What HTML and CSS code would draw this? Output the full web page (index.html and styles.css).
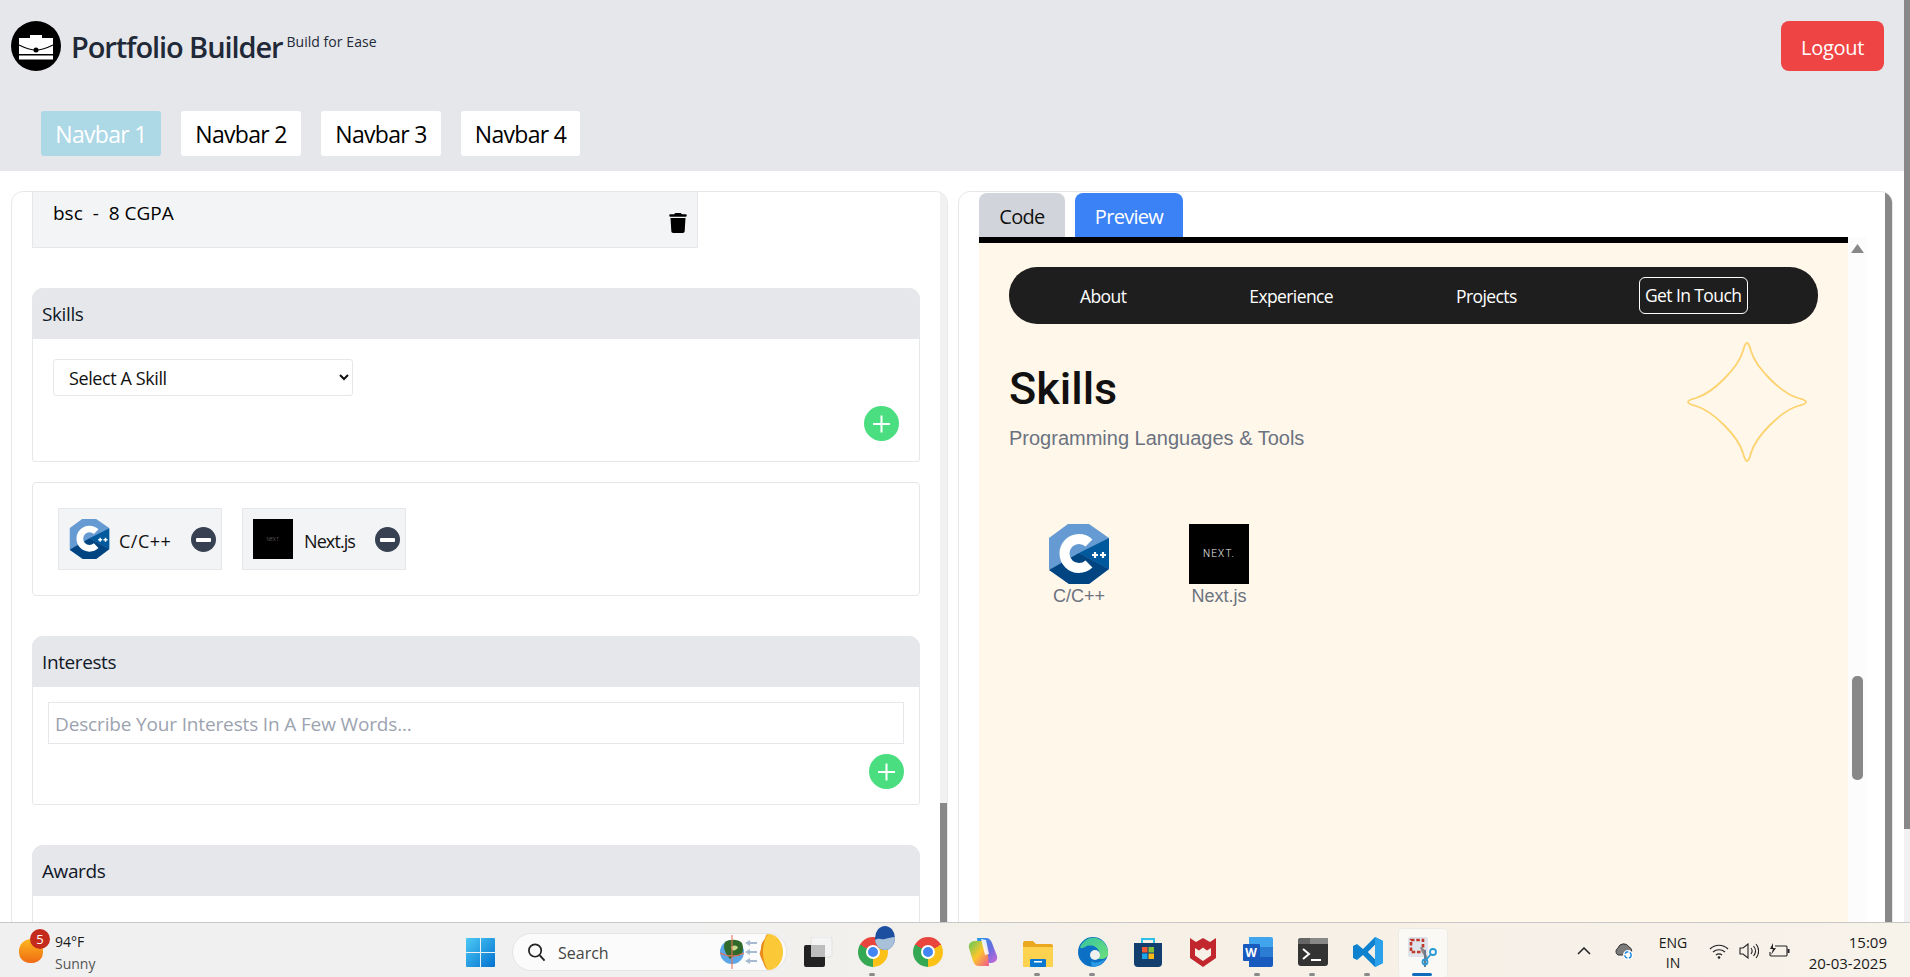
FILE: index.html
```html
<!DOCTYPE html>
<html lang="en">
<head>
<meta charset="utf-8">
<title>Portfolio Builder</title>
<link rel="stylesheet" href="styles.css">
</head>
<body>
<div class="window">
  <div class="main">
    <header class="header">
      <div class="brand-row">
        <div class="logo">
          <svg viewBox="0 0 50 50" width="50" height="50"><circle cx="25" cy="25" r="25" fill="#000"/><path d="M19 14h12v3h-12z" fill="#fff"/><path d="M8 17h34v16H8z" fill="#fff"/><path d="M8 34.500h34v4H8z" fill="#fff"/><path d="M8 24c6 3 11 5 17 5s11-2 17-5" fill="none" stroke="#000" stroke-width="1.200"/><circle cx="25" cy="29" r="2.500" fill="#000"/></svg>
        </div>
        <h1 class="title">Portfolio Builder</h1>
        <span class="tagline">Build for Ease</span>
        <button class="logout">Logout</button>
      </div>
      <nav class="nav-tabs">
        <button class="nav-tab nav-tab-active">Navbar 1</button>
        <button class="nav-tab">Navbar 2</button>
        <button class="nav-tab">Navbar 3</button>
        <button class="nav-tab">Navbar 4</button>
      </nav>
    </header>
    <div class="panels">
      <section class="panel panel-left">
        <div class="form-col">
          <div class="edu-item">
            <span class="edu-text">bsc &nbsp;-&nbsp; 8 CGPA</span>
            <svg class="trash" viewBox="0 0 448 512"><path d="M135.200 17.700L128 32H32C14.300 32 0 46.300 0 64S14.300 96 32 96H416c17.700 0 32-14.300 32-32s-14.300-32-32-32H320l-7.200-14.300C307.400 6.800 296.300 0 284.200 0H163.800c-12.100 0-23.200 6.800-28.600 17.700zM416 128H32L53.200 467c1.600 25.300 22.600 45 47.900 45H346.900c25.300 0 46.300-19.700 47.900-45L416 128z"/></svg>
          </div>
          <div class="card card-skills">
            <div class="card-head">Skills</div>
            <div class="skills-body">
              <select class="skill-select"><option>Select A Skill</option></select>
              <div class="plus-row"><span class="plus"></span></div>
            </div>
          </div>
          <div class="card card-chips">
            <div class="chip">
              <svg class="chip-icon" viewBox="0 0 60 60"><use href="#cpp"/></svg>
              <span class="chip-label">C/C++</span>
              <span class="minus"></span>
            </div>
            <div class="chip">
              <div class="next-tile next-tile-small">NEXT.</div>
              <span class="chip-label chip-label-next">Next.js</span>
              <span class="minus"></span>
            </div>
          </div>
          <div class="card card-interests">
            <div class="card-head">Interests</div>
            <div class="interests-body">
              <input class="interest-input" placeholder="Describe Your Interests In A Few Words...">
              <div class="plus-row plus-row-interests"><span class="plus"></span></div>
            </div>
          </div>
          <div class="card card-awards">
            <div class="card-head">Awards</div>
            <div class="awards-body"></div>
          </div>
        </div>
        <div class="scroll-track"><div class="scroll-thumb"></div></div>
      </section>
      <section class="panel panel-right">
        <div class="right-col">
          <div class="tabs">
            <button class="tab tab-code">Code</button>
            <button class="tab tab-preview">Preview</button>
          </div>
          <div class="preview-row">
            <div class="preview">
              <div class="site-nav">
                <a class="site-link">About</a>
                <a class="site-link">Experience</a>
                <a class="site-link">Projects</a>
                <a class="site-link site-link-box">Get In Touch</a>
              </div>
              <svg class="star" viewBox="0 0 120 120"><path d="M60 1C62 1 63 5 64 9C69 26 94 51 111 56C115 57 119 58 119 60C119 62 115 63 111 64C94 69 69 94 64 111C63 115 62 119 60 119C58 119 57 115 56 111C51 94 26 69 9 64C5 63 1 62 1 60C1 58 5 57 9 56C26 51 51 26 56 9C57 5 58 1 60 1Z" fill="none" stroke="#fdd36f" stroke-width="1.800"/></svg>
              <h2 class="site-title">Skills</h2>
              <p class="site-sub">Programming Languages &amp; Tools</p>
              <div class="site-skills">
                <div class="site-skill">
                  <svg class="site-skill-icon" viewBox="0 0 60 60"><use href="#cpp"/></svg>
                  <span>C/C++</span>
                </div>
                <div class="site-skill">
                  <div class="next-tile">NEXT.</div>
                  <span>Next.js</span>
                </div>
              </div>
            </div>
            <div class="inner-scroll">
              <svg class="inner-arrow" viewBox="0 0 12 8" preserveAspectRatio="none"><path d="M6 0l6 8H0z" fill="#888"/></svg>
              <div class="inner-thumb"></div>
            </div>
          </div>
        </div>
        <div class="right-thumb"></div>
      </section>
    </div>
  </div>
  <div class="page-scroll"><div class="page-thumb"></div></div>
</div>

<footer class="taskbar">
  <div class="weather">
    <span class="weather-icon"></span>
    <span class="weather-badge">5</span>
    <div class="weather-text"><span class="temp">94°F</span><span class="sky">Sunny</span></div>
  </div>
  <svg class="win-logo" viewBox="0 0 29 29"><defs><linearGradient id="w" x1="0" y1="0" x2="1" y2="1"><stop offset="0" stop-color="#4cc9f5"/><stop offset="1" stop-color="#0272cf"/></linearGradient></defs><path d="M1 0h13v14H0V1a1 1 0 0 1 1-1zM15 0h13a1 1 0 0 1 1 1v13H15zM0 15h14v14H1a1 1 0 0 1-1-1zM15 15h14v13a1 1 0 0 1-1 1H15z" fill="url(#w)"/></svg>
  <div class="search">
    <svg class="search-icon" viewBox="0 0 20 20"><circle cx="8.500" cy="8.500" r="6.500" fill="none" stroke="#222" stroke-width="1.800"/><path d="M13.500 13.500L18.500 19" stroke="#222" stroke-width="2"/></svg>
    <span class="search-text">Search</span>
    <svg class="search-art" viewBox="0 0 66 38"><circle cx="13" cy="19" r="12" fill="#5aa6e6"/><path d="M6 9c5-3 13-3 17 1 2 6 1 11-3 13-3-2-5 0-9 3-3-4-8-10-5-17z" fill="#2f6a2a"/><path d="M12 14c3-2 5-2 7 0-1 3-4 4-6 3z" fill="#c9d98a"/><path d="M1 20c7 4 17 4 24 0" fill="none" stroke="#e8735a" stroke-width="1.100"/><path d="M13 2v34" stroke="#e8735a" stroke-width="1.100"/><path d="M28 10h10M28 19h10M28 28h10" stroke="#a7bbd0" stroke-width="2.200"/><path d="M26 10l5-3v6zM26 19l5-3v6zM26 28l5-3v6z" fill="#a7bbd0"/><path d="M49 1c-3 1-2 4-4 6s-3 5-3 8-2 4-1 7 2 5 3 7 1 5 5 8z" fill="#e88a1c"/><path d="M49 1c9 0 15 8 15 18s-6 18-15 18c-3-4-5-11-5-18s2-14 5-18z" fill="#fbc938"/></svg>
  </div>
  <div class="apps">
    <div class="slot">
      <svg class="app" viewBox="0 0 30 30"><rect x="8" y="0" width="21" height="20" rx="2" fill="#f4f4f4" stroke="#e2e2e2"/><rect x="1" y="8" width="21" height="22" rx="2" fill="#222"/><rect x="8" y="8" width="14" height="12" fill="#bdbdbd"/></svg>
    </div>
    <div class="slot slot-open">
      <div class="chrome app"></div>
      <svg class="chrome-badge" viewBox="0 0 20 24"><ellipse cx="10" cy="12" rx="10" ry="12" fill="#1c4fa0"/><path d="M0 14c4-3 6 0 10-1s6-2 10-2c0 7-4 13-10 13-5 0-9-4-10-10z" fill="#a8c0d8"/></svg>
    </div>
    <div class="slot">
      <div class="chrome app"></div>
    </div>
    <div class="slot">
      <svg class="app" viewBox="0 0 30 30"><defs><linearGradient id="c1" x1="0" y1="0" x2="1" y2="1"><stop offset="0" stop-color="#1f9be8"/><stop offset=".55" stop-color="#6a6be0"/><stop offset="1" stop-color="#d06ad6"/></linearGradient><linearGradient id="c2" x1="0" y1="0" x2="1" y2="1"><stop offset="0" stop-color="#5fc85a"/><stop offset=".5" stop-color="#fbc62d"/><stop offset="1" stop-color="#f0568e"/></linearGradient></defs><path d="M9 1H18C21 1 23 3 24 6L29 19C30 23 27 26 23 26H14L10 12Z" fill="url(#c1)"/><path d="M21 29H11C8 29 6 27 5 24L1 11C0 7 3 4 7 4H15L20 18Z" fill="url(#c2)"/><path d="M13 2l5 1 3 14-4 1z" fill="#fff" fill-opacity=".85"/></svg>
    </div>
    <div class="slot slot-open">
      <svg class="app" viewBox="0 0 30 30"><path d="M0 6a2 2 0 0 1 2-2h8l3 3h15a2 2 0 0 1 2 2v19a2 2 0 0 1-2 2H2a2 2 0 0 1-2-2z" fill="#e9a81f"/><path d="M0 10h30v18a2 2 0 0 1-2 2H2a2 2 0 0 1-2-2z" fill="#fdd24f"/><rect x="7" y="22" width="16" height="8" rx="1" fill="#0a78d0"/><rect x="11" y="24" width="8" height="1.500" fill="#fff"/></svg>
    </div>
    <div class="slot slot-open">
      <svg class="app" viewBox="0 0 30 30"><defs><linearGradient id="e1" x1="0" y1="0" x2="1" y2="1"><stop offset="0" stop-color="#36c4a0"/><stop offset="1" stop-color="#6fe07a"/></linearGradient></defs><circle cx="15" cy="15" r="15" fill="#0c70c4"/><path d="M2 10C6 2 14-1 21 2c6 3 9 8 9 14 0 4-3 6-7 6-3 0-5-1-6-2 4-1 5-4 4-6-2-5-9-7-14-4-2 1-4 2-5 0z" fill="url(#e1)"/><circle cx="17" cy="18" r="5" fill="#f0f0ee"/><path d="M13 24c4 3 10 1 14-2-3 6-9 8-13 8z" fill="#2b9be6"/></svg>
    </div>
    <div class="slot">
      <svg class="app" viewBox="0 0 30 30"><path d="M9 6V2h12v4" fill="none" stroke="#2cc0e8" stroke-width="2"/><path d="M1 6h28v20a4 4 0 0 1-4 4H5a4 4 0 0 1-4-4z" fill="#123f6e"/><rect x="9" y="10" width="5.500" height="5.500" fill="#ef5a33"/><rect x="15.500" y="10" width="5.500" height="5.500" fill="#80c03a"/><rect x="9" y="16.500" width="5.500" height="5.500" fill="#1aa4ea"/><rect x="15.500" y="16.500" width="5.500" height="5.500" fill="#fcb814"/></svg>
    </div>
    <div class="slot">
      <svg class="app" viewBox="0 0 28 30"><path fill-rule="evenodd" d="M1 1L7 5 14 1 21 5 27 1V21L14 30 1 21ZM6 11V18.500L14 24 22 18.500V11L18 13.500 14 10.500 10 13.500Z" fill="#c1272d"/></svg>
    </div>
    <div class="slot slot-open">
      <div class="word app"><span class="word-w">W</span></div>
    </div>
    <div class="slot slot-open">
      <svg class="app" viewBox="0 0 30 30"><rect y="1" width="30" height="28" rx="3" fill="#333"/><path d="M0 4a3 3 0 0 1 3-3h27v0 6H0z" fill="#888"/><path d="M0 7V4a3 3 0 0 1 3-3h9v6z" fill="#666"/><path d="M5 12l6 5-6 5" fill="none" stroke="#fff" stroke-width="2"/><path d="M13 23h10" stroke="#fff" stroke-width="2"/></svg>
    </div>
    <div class="slot slot-open">
      <svg class="app" viewBox="0 0 30 30"><path d="M22 0l8 4v22l-8 4L10 18l-6 5-4-2V9l4-2 6 5zM22 8l-7 7 7 7z" fill="#0f82cf"/><path d="M22 0l8 4v22l-8 4z" fill="#2aa1ea"/><path d="M22 8l-7 7 7 7z" fill="#f4efe6"/></svg>
    </div>
    <div class="slot slot-active">
      <svg class="app" viewBox="0 0 30 30"><rect x="0" y="0" width="20" height="20" rx="2" fill="#dfe3ea"/><rect x="3" y="3" width="12" height="12" fill="none" stroke="#c0392b" stroke-width="2.600" stroke-dasharray="3.500 1.800"/><path d="M13 10l6 12" stroke="#8a8a8a" stroke-width="2.500"/><path d="M17 13v17" stroke="#6a7c8c" stroke-width="2"/><circle cx="25" cy="15" r="3" fill="none" stroke="#2a9ad6" stroke-width="1.800"/><circle cx="17" cy="25" r="2.500" fill="none" stroke="#2a9ad6" stroke-width="1.800"/><path d="M23 17l-5 6" stroke="#2a9ad6" stroke-width="1.800"/></svg>
    </div>
  </div>
  <div class="tray">
    <svg class="t-chevron" viewBox="0 0 14 8"><path d="M1 7l6-6 6 6" fill="none" stroke="#222" stroke-width="1.500"/></svg>
    <svg class="t-cloud" viewBox="0 0 20 18"><path d="M4 13a4 4 0 0 1 0-7 6 6 0 0 1 11-1 4 4 0 0 1 2 6v2z" fill="#7b7b7b" stroke="#333"/><circle cx="14" cy="13" r="5" fill="#fff"/><circle cx="14" cy="13" r="3.200" fill="none" stroke="#1c86dc" stroke-width="1.400" stroke-dasharray="4 1.500"/></svg>
    <div class="t-lang"><span>ENG</span><span>IN</span></div>
    <svg class="t-wifi" viewBox="0 0 20 16"><path d="M1 6c5-5 13-5 18 0M4 9c3.500-3 8.500-3 12 0M7 12c2-1.500 4-1.500 6 0" fill="none" stroke="#222" stroke-width="1.200"/><circle cx="10" cy="14.500" r="1.300" fill="#222"/></svg>
    <svg class="t-vol" viewBox="0 0 20 16"><path d="M1 5h3l5-4v14l-5-4H1z" fill="none" stroke="#222" stroke-width="1.100"/><path d="M12 5c1.500 2 1.500 4 0 6M14.500 3c2.500 3 2.500 7 0 10M17 1c3.500 4 3.500 10 0 14" fill="none" stroke="#222" stroke-width="1.100"/></svg>
    <svg class="t-batt" viewBox="0 0 21 16"><path d="M6 3h11a1 1 0 0 1 1 1v8a1 1 0 0 1-1 1H2a1 1 0 0 1-1-1V9" fill="none" stroke="#222" stroke-width="1.100"/><rect x="18.500" y="6" width="2" height="4" fill="#222"/><path d="M4 0L1 6h3l-2 6 5-7H4z" fill="#222"/></svg>
    <div class="t-clock"><span>15:09</span><span>20-03-2025</span></div>
  </div>
</footer>

<svg class="defs" width="0" height="0">
  <symbol id="cpp" viewBox="0 0 60 60">
    <path d="M19 0h21l20 14v31L40 60H20L0 45V14z" fill="#659ad2"/>
    <path d="M60 14v31L30 29z" fill="#00599c"/>
    <path d="M0 46l30-17 30 16-20 15H20z" fill="#004482"/>
    <path d="M40 19A14.500 14.500 0 1 0 40 40" fill="none" stroke="#fff" stroke-width="10"/>
    <path d="M43 31h6M46 28v6M51 31h6M54 28v6" stroke="#fff" stroke-width="2.200"/>
  </symbol>
</svg>
</body>
</html>
```
FILE: styles.css
```css
* { box-sizing: border-box; }
html, body { margin: 0; height: 100%; overflow: hidden; }
body {
  display: flex;
  flex-direction: column;
  height: 977px;
  font-family: "Open Sans", "Noto Sans", sans-serif;
  color: #111827;
  background: #fff;
}
button { font: inherit; border: 0; padding: 0; }
.defs { position: absolute; }

.window { flex: 1; min-height: 0; display: flex; }
.main { width: 1904px; display: flex; flex-direction: column; overflow: hidden; }
.page-scroll { width: 6px; background: #f1f1f1; }
.page-thumb { height: 829px; background: #888; }

.header { height: 171px; flex: none; background: #e5e7eb; padding: 21px 20px 0 11px; }
.brand-row { display: flex; align-items: center; height: 50px; }
.logo { width: 50px; height: 50px; }
.logo svg { display: block; }
.title { margin: 0 0 0 10px; font-size: 29px; font-weight: 600; color: #1f2937; letter-spacing: -1.1px; white-space: nowrap; }
.tagline { margin: 0 0 10px 4px; font-size: 14px; color: #1f2937; letter-spacing: 0.05px; }
.logout { margin-left: auto; width: 103px; height: 50px; padding-top: 2px; border-radius: 8px; background: #ef4444; color: #fff; font-size: 20px; letter-spacing: -0.3px; }
.nav-tabs { display: flex; gap: 20px; margin: 40px 0 0 30px; }
.nav-tab { width: 120px; height: 45px; background: #fff; border-radius: 3px; font-size: 23px; color: #000; letter-spacing: -0.7px; }
.nav-tab:last-child { width: 119px; }
.nav-tab-active { background: #add8e6; color: #fff; }

.panels { flex: 1; min-height: 0; display: flex; gap: 10px; padding: 20px 0 0 11px; overflow: hidden; }
.panel { flex: none; height: 780px; border: 1px solid #e5e7eb; border-radius: 12px; display: flex; overflow: hidden; }

.panel-left { width: 937px; padding-left: 20px; gap: 20px; }
.form-col { width: 888px; flex: none; display: flex; flex-direction: column; }
.scroll-track { width: 8px; flex: none; background: #f1f1f1; }
.scroll-thumb { margin-top: 611px; height: 200px; background: #888; }

.edu-item { width: 666px; height: 56px; flex: none; background: #f3f4f6; border: 1px solid #e5e7eb; border-top: 0; display: flex; padding-left: 20px; position: relative; }
.edu-text { font-size: 19px; line-height: 42px; color: #000; letter-spacing: 0; }
.trash { position: absolute; left: 636px; top: 21px; width: 18px; height: 20px; fill: #000; }

.card { flex: none; border: 1px solid #e5e7eb; border-radius: 12px 12px 3px 3px; background: #fff; }
.card-head { height: 51px; background: #e5e7eb; border-radius: 11px 11px 0 0; padding-left: 10px; font-size: 19px; line-height: 52px; color: #111827; letter-spacing: -0.4px; margin: -1px -1px 0; }
.card-skills { height: 174px; margin-top: 40px; }
.skills-body { padding: 20px 20px 0; }
.skill-select { display: block; width: 300px; height: 37px; padding-left: 11px; background: #fff; border: 1px solid #e5e7eb; border-radius: 3px; font-family: inherit; font-size: 18px; letter-spacing: -0.4px; color: #111; }
.plus-row { display: flex; justify-content: flex-end; margin-top: 10px; }
.plus { width: 35px; height: 35px; border-radius: 50%; background: #4ade80; position: relative; display: block; }
.plus::before, .plus::after { content: ""; position: absolute; background: #fff; left: 9px; top: 16.500px; width: 17px; height: 2px; }
.plus::after { transform: rotate(90deg); }

.card-chips { height: 114px; margin-top: 20px; border-radius: 4px; padding: 25px 0 0 25px; display: flex; gap: 20px; }
.chip { width: 164px; height: 62px; background: #f3f4f6; border: 1px solid #e5e7eb; display: flex; align-items: center; padding: 0 5px 0 10px; }
.chip-icon { width: 41px; height: 40px; flex: none; }
.chip-label { margin: 3px 0 0 9px; font-size: 18px; letter-spacing: 0.5px; color: #111; }
.chip-label-next { margin-left: 11px; letter-spacing: -0.9px; }
.minus { margin: 1px 0 0 auto; width: 25px; height: 25px; border-radius: 50%; background: #374151; position: relative; }
.minus::before { content: ""; position: absolute; left: 5px; top: 10.500px; width: 15px; height: 4px; background: #fff; border-radius: 1px; }
.next-tile { width: 60px; height: 60px; background: #000; color: #eee; font-family: Roboto, sans-serif; font-size: 10px; font-weight: 300; letter-spacing: 1.2px; display: flex; align-items: center; justify-content: center; flex: none; }
.next-tile-small { width: 40px; height: 40px; font-size: 5px; letter-spacing: 0; color: #777; }

.card-interests { height: 169px; margin-top: 40px; }
.interests-body { padding: 15px 15px 0; }
.interest-input { display: block; width: 856px; height: 42px; padding: 1px 5px 0 6px; border: 1px solid #e5e7eb; font-family: inherit; font-size: 19px; letter-spacing: -0.15px; }
.interest-input::placeholder { color: #9ca3af; opacity: 1; }
.plus-row-interests { margin-top: 10px; }
.card-awards { height: 200px; margin-top: 40px; }

.panel-right { width: 935px; padding-left: 20px; justify-content: space-between; }
.right-col { flex: 1; display: flex; flex-direction: column; min-width: 0; }
.right-thumb { width: 7px; flex: none; background: #888; }
.tabs { display: flex; gap: 10px; height: 44px; margin-top: 1px; flex: none; }
.tab { height: 44px; padding-top: 3px; border-radius: 8px 8px 0 0; font-size: 20px; letter-spacing: -0.7px; }
.tab-code { width: 86px; background: #d1d5db; color: #111; }
.tab-preview { width: 108px; background: #3b82f6; color: #fff; }
.preview-row { flex: 1; display: flex; min-height: 0; }
.preview { width: 869px; flex: none; border-top: 6px solid #000; background: #fff7ea; padding: 24px 30px 0; position: relative; }
.inner-scroll { width: 18px; flex: none; background: #fcfcfc; position: relative; padding-top: 7px; }
.inner-arrow { display: block; width: 13px; height: 9px; margin-left: 3px; }
.inner-thumb { position: absolute; left: 4px; top: 439px; width: 11px; height: 104px; border-radius: 5px; background: #888; }

.site-nav { width: 809px; height: 57px; border-radius: 28px; background: #1e1e1e; display: flex; align-items: center; gap: 123px; padding-left: 71px; }
.site-link { color: #fff; font-size: 17.500px; letter-spacing: -0.6px; white-space: nowrap; }
.site-link-box { width: 109px; height: 37px; margin-left: -1px; border: 1px solid #fff; border-radius: 6px; text-align: center; line-height: 35px; }
.star { position: absolute; left: 708px; top: 99px; width: 120px; height: 120px; }
.site-title { margin: 37px 0 0; font-family: Roboto, sans-serif; font-size: 45px; font-weight: 500; line-height: 56px; color: #111; }
.site-sub { margin: 7px 0 0; font-family: "Liberation Sans", sans-serif; font-size: 20px; line-height: 28px; color: #6b7280; }
.site-skills { display: flex; margin-top: 72px; }
.site-skill { width: 140px; display: flex; flex-direction: column; align-items: center; font-family: "Liberation Sans", sans-serif; font-size: 18px; line-height: 24px; color: #6b7280; }
.site-skill-icon { width: 60px; height: 60px; }

.taskbar { height: 55px; flex: none; display: flex; border-top: 1px solid #c8c8c8; background: linear-gradient(90deg, #f0f0f0 0, #f0f0f0 35%, #f6f0e6 62%, #f7f2ea 100%); padding-left: 19px; color: #1a1a1a; position: relative; }
.weather { width: 447px; flex: none; display: flex; position: relative; }
.weather-icon { width: 24px; height: 24px; margin-top: 16px; border-radius: 50% 50% 45% 45%; background: linear-gradient(180deg, #fbb81f, #f06a14); }
.weather-badge { position: absolute; left: 11px; top: 6px; width: 20px; height: 20px; border-radius: 50%; background: #c42b1c; color: #fff; font-size: 13px; line-height: 20px; text-align: center; }
.weather-text { display: flex; flex-direction: column; margin-left: 12px; font-size: 14px; line-height: 21px; padding-top: 8px; }
.sky { color: #555; margin-top: 1px; }
.win-logo { width: 29px; height: 29px; margin-top: 15px; flex: none; }
.search { width: 275px; height: 38px; margin: 10px 0 0 17px; flex: none; display: flex; align-items: center; padding-left: 14px; border-radius: 19px; background: #fbfbfb; border: 1px solid #e4e4e4; }
.search-icon { width: 19px; height: 20px; }
.search-text { margin: 2px 0 0 12px; font-size: 16px; color: #444; letter-spacing: 0; }
.search-art { width: 66px; height: 38px; margin-left: auto; margin-right: 1px; flex: none; }
.apps { display: flex; margin-left: 3px; flex: none; }
.slot { width: 55px; height: 54px; display: flex; justify-content: center; padding-top: 14px; position: relative; }
.app { width: 30px; height: 30px; display: block; flex: none; }
.slot-open::after { content: ""; position: absolute; left: 24px; top: 50px; width: 6px; height: 3px; border-radius: 2px; background: #8a8a8a; }
.slot-active::before { content: ""; position: absolute; left: 3px; top: 5px; width: 48px; height: 48px; border-radius: 4px; background: #fbf9f5; border: 1px solid #efece6; }
.slot-active::after { content: ""; position: absolute; left: 17px; top: 50px; width: 20px; height: 3px; border-radius: 2px; background: #0f6cbd; }
.slot-active .app { position: relative; }
.chrome { border-radius: 50%; background: conic-gradient(#e8453c 0 60deg, #fbc116 60deg 180deg, #34a853 180deg 300deg, #e8453c 300deg); position: relative; }
.chrome::after { content: ""; position: absolute; left: 8px; top: 8px; width: 14px; height: 14px; border-radius: 50%; background: #4285f4; border: 2px solid #fff; box-sizing: border-box; }
.chrome-badge { position: absolute; left: 30px; top: 3px; width: 20px; height: 24px; }
.word { background: linear-gradient(180deg, #41a5ee 0 33%, #2b7cd3 33% 66%, #185abd 66%); background-size: 24px 100%; background-position: right top; background-repeat: no-repeat; border-radius: 2px; position: relative; }
.word-w { position: absolute; left: 0; top: 7px; width: 17px; height: 17px; background: #185abd; color: #fff; font-size: 12px; font-weight: 700; line-height: 17px; text-align: center; border-radius: 1px; }

.tray { display: flex; margin-left: 127px; flex: none; position: relative; }
.t-chevron { width: 14px; height: 8px; margin-top: 24px; }
.t-cloud { width: 20px; height: 18px; margin: 19px 0 0 23px; }
.t-lang { width: 40px; margin: 10px 0 0 19px; display: flex; flex-direction: column; align-items: center; font-size: 14px; line-height: 20px; letter-spacing: 0; }
.t-wifi { width: 20px; height: 16px; margin: 20px 0 0 16px; }
.t-vol { width: 20px; height: 16px; margin: 20px 0 0 10px; }
.t-batt { width: 21px; height: 16px; margin: 20px 0 0 10px; }
.t-clock { width: 90px; margin: 9px 0 0 7px; display: flex; flex-direction: column; align-items: flex-end; font-size: 15px; line-height: 21px; letter-spacing: 0; }
```
